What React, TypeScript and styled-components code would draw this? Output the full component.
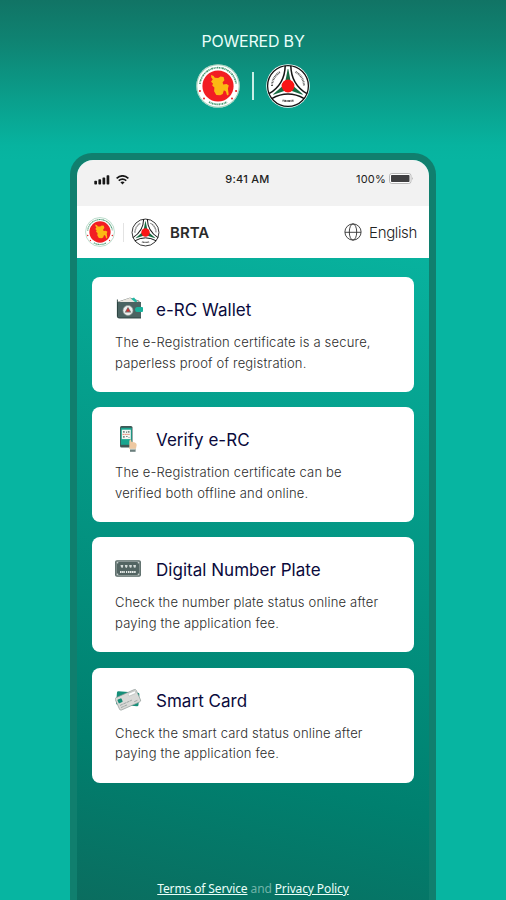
import * as React from 'react'
import styled, { createGlobalStyle } from 'styled-components'

const GlobalStyle = createGlobalStyle`
  * {
    box-sizing: border-box;
  }
  body {
    margin: 0;
    font-family: Inter, 'Liberation Sans', sans-serif;
  }
`

const Page = styled.div`
  width: 506px;
  height: 900px;
  overflow: hidden;
  display: flex;
  flex-direction: column;
  align-items: center;
  background: linear-gradient(180deg, #117465 0, #0f8372 40px, #0a9f8c 100px, #07b39f 145px, #07b5a1 160px);
`

const PoweredBy = styled.div`
  height: 153px;
  flex: none;
  padding-top: 31px;
  display: flex;
  flex-direction: column;
  align-items: center;
`

const PoweredTitle = styled.div`
  font-size: 16px;
  line-height: 20px;
  letter-spacing: -0.2px;
  color: #e9fffa;
`

const LogoPair = styled.div`
  display: flex;
  align-items: center;
  gap: 12px;
  margin-top: 13px;
  svg {
    display: block;
  }
`

const Divider = styled.div<{ height: number; color: string; thickness: number }>`
  width: ${props => props.thickness}px;
  height: ${props => props.height}px;
  background: ${props => props.color};
`

const Phone = styled.div`
  width: 366px;
  height: 780px;
  flex: none;
  padding: 7px 7px 0 7px;
  border-radius: 22px 22px 0 0;
  background: #107f6e;
`

const Screen = styled.div`
  height: 100%;
  overflow: hidden;
  border-radius: 16px 16px 0 0;
  display: flex;
  flex-direction: column;
  background: linear-gradient(193deg, #08b29e 95px, #00806f 640px, #0b6c5e 810px);
`

const StatusBar = styled.div`
  height: 46px;
  flex: none;
  padding: 0 15px 9px 17px;
  display: grid;
  grid-template-columns: 1fr auto 1fr;
  align-items: center;
  background: #f2f2f2;
  color: #222;
  font-size: 11px;
`

const Signals = styled.div`
  display: flex;
  align-items: center;
  gap: 5px;
  padding-top: 2px;
`

const Clock = styled.div`
  font-weight: 500;
  letter-spacing: 0.25px;
  padding-right: 13px;
`

const Battery = styled.div`
  display: flex;
  justify-content: flex-end;
  align-items: center;
  gap: 3px;
  letter-spacing: 0.2px;
`

const AppHeader = styled.header`
  height: 52px;
  flex: none;
  padding: 0 12px 0 8px;
  display: flex;
  align-items: center;
  background: white;
  svg {
    display: block;
  }
`

const HeaderLogos = styled.div`
  display: flex;
  align-items: center;
  gap: 7.5px;
`

const Brand = styled.div`
  margin-left: 10px;
  font-size: 15px;
  font-weight: 600;
  color: #2a2a2a;
`

const Language = styled.div`
  margin-left: auto;
  display: flex;
  align-items: center;
  gap: 7.5px;
  font-size: 15px;
  font-weight: 300;
  letter-spacing: -0.35px;
  color: #222;
`

const Content = styled.main`
  flex: 1;
  padding: 19px 15px 0;
  display: flex;
  flex-direction: column;
  gap: 15.2px;
`

const Card = styled.section`
  height: 115px;
  padding: 18px 23px 0;
  border-radius: 8px;
  background: white;
`

const CardHead = styled.div`
  height: 28px;
  display: flex;
  align-items: center;
  svg {
    flex: none;
    margin-right: 13px;
  }
`

const CardTitle = styled.h2`
  margin: 0;
  padding-top: 2px;
  font-size: 17px;
  font-weight: 400;
  line-height: 28px;
  letter-spacing: 0.03px;
  color: #0a0a3c;
`

const CardText = styled.p`
  margin: 9px 0 0;
  font-size: 13px;
  font-weight: 300;
  line-height: 20.5px;
  letter-spacing: 0.18px;
  color: #2c2c2c;
  white-space: pre-line;
`

const Terms = styled.footer`
  height: 30px;
  flex: none;
  margin-bottom: 23px;
  text-align: center;
  font-family: 'Noto Sans', 'Open Sans', sans-serif;
  font-size: 12px;
  line-height: 18px;
  letter-spacing: -0.12px;
  color: #6fb3a8;
  a {
    color: #eafff9;
    text-decoration: underline;
  }
`

const GovSeal = ({ size }: { size: number }) => (
  <svg width={size} height={size} viewBox="0 0 44 44">
    <circle cx="22" cy="22" r="21.8" fill="#fff" />
    <circle cx="22" cy="22" r="21.2" fill="none" stroke="#3c9a6a" strokeWidth="0.5" />
    <path d="M3.9 20A18.2 18.2 0 0 1 40.1 20" fill="none" stroke="#4b9c74" strokeWidth="1.7" strokeDasharray="1.3 .6 .7 .5 1.8 .6" />
    <path d="M13 38A18.4 18.4 0 0 0 31 38" fill="none" stroke="#4b9c74" strokeWidth="1.8" strokeDasharray="1.4 .6 .8 .5" />
    <circle cx="22" cy="22" r="15.6" fill="#f21d23" />
    <path
      d="M15 11l2.6 1 1.2 1.8 3.4.2 2.4-1.4 3 .4.8 3.2-1.8 2 .6 2.2 3.4-.4 2.2 1.6-.9 3 .8 6-1.6 1-1.2-4.2-2-1.1-1.2 3.8-2.5 1.2-3.9-.4-2.2-3.6.3-3.7-2.2-2 .8-2.2-2-1.7 1.8-2.4-1.4-1.6z"
      fill="#fcb813"
    />
    <g fill="#e5252a">
      <circle cx="3.9" cy="27" r="1.1" />
      <circle cx="8" cy="34.4" r="1" />
      <circle cx="40.1" cy="27" r="1.1" />
      <circle cx="36" cy="34.4" r="1" />
    </g>
  </svg>
)

const BrtaSeal = ({ size }: { size: number }) => (
  <svg width={size} height={size} viewBox="0 0 44 44">
    <circle cx="22" cy="22" r="21.8" fill="#fff" />
    <circle cx="22" cy="22" r="20.4" fill="none" stroke="#151515" strokeWidth="1.3" />
    {[0, 120, 240].map(angle => (
      <g key={angle} transform={`rotate(${angle} 22 22)`}>
        <path d="M5.8 34.6Q22 25.6 38.2 34.6" fill="none" stroke="#151515" strokeWidth="1.5" />
        <path d="M21.7 5L19.4 17h5.2L22.3 5z" fill="#176c42" />
      </g>
    ))}
    <path d="M6 22A16 16 0 0 1 14.4 7.9" fill="none" stroke="#555" strokeWidth="2" strokeDasharray="1 .6 .8 .7" />
    <path d="M29.6 7.9A16 16 0 0 1 38 22" fill="none" stroke="#555" strokeWidth="2" strokeDasharray="1 .6 .8 .7" />
    <path d="M16.5 36.4Q22 37.6 27.5 36.4" fill="none" stroke="#555" strokeWidth="2" strokeDasharray="1.2 .5 1.8 .5" />
    <circle cx="22" cy="22" r="6.4" fill="#fa1515" />
  </svg>
)

const SignalIcon = () => (
  <svg width="17" height="10" viewBox="0 0 17 10" fill="#171717">
    <rect x="0.3" y="5.7" width="2.7" height="3.8" rx=".7" />
    <rect x="4.4" y="4.2" width="2.7" height="5.3" rx=".7" />
    <rect x="8.5" y="2.4" width="2.7" height="7.1" rx=".7" />
    <rect x="12.6" y="0.3" width="2.7" height="9.2" rx=".7" />
  </svg>
)

const WifiIcon = () => (
  <svg width="13" height="10" viewBox="0 0 13 10" fill="none" stroke="#171717" strokeWidth="1.6">
    <path d="M.6 3.4Q6.5-1.8 12.4 3.4M2.7 5.7Q6.5 2.4 10.3 5.7" />
    <path d="M4.4 7.3Q6.5 5.8 8.6 7.3L6.5 9.6z" fill="#171717" stroke="none" />
  </svg>
)

const BatteryIcon = () => (
  <svg width="25" height="11" viewBox="0 0 25 11">
    <rect x=".5" y=".5" width="21.5" height="10" rx="2.3" fill="#fff" stroke="#aaa" strokeWidth=".8" />
    <rect x="2" y="2" width="18.5" height="7" rx=".8" fill="#404042" />
    <path d="M23.4 4q1.2 1.5 0 3z" fill="#999" />
  </svg>
)

const GlobeIcon = () => (
  <svg width="18" height="18" viewBox="0 0 18 18" fill="none" stroke="#333" strokeWidth=".9">
    <circle cx="9" cy="9" r="8.1" />
    <ellipse cx="9" cy="9" rx="3.7" ry="8.1" />
    <path d="M1 9.3h16" />
  </svg>
)

const WalletIcon = () => (
  <svg width="28" height="28" viewBox="0 0 28 28">
    <path d="M3 7l12-4 9 3 1 4H3z" fill="#d8d5cc" stroke="#5b6463" strokeWidth=".6" />
    <path d="M5 7l10-3.5 2 4z" fill="#f4f0ea" />
    <path d="M16 4l3-1.5 2.5 3 1.5 4-4-1z" fill="#20b8a3" />
    <path d="M2 7h24v16H4q-2 0-2-2z" fill="#4b6462" />
    <path d="M3.5 7L15 3l5 4z" fill="#e9e6df" />
    <path d="M2.4 4.5v16.8q0 1.7 1.8 1.7H26" fill="none" stroke="#263d3b" strokeWidth=".9" />
    <path d="M22 12h5q1 0 1 1v3q0 1-1 1h-5q-2 0-2-2.5t2-2.5z" fill="#18b29c" />
    <circle cx="13" cy="15.5" r="5" fill="#eef0ee" stroke="#8c9996" strokeWidth=".7" />
    <path d="M13 11.8l3.4 5.6H9.6z" fill="#74716e" />
    <path d="M13 13l1.8 3.4h-3.6z" fill="#d62a2c" />
  </svg>
)

const PhoneScanIcon = () => (
  <svg width="28" height="28" viewBox="0 0 28 28">
    <rect x="5" y="1" width="12.5" height="21.5" rx="1.5" fill="#3f5755" />
    <rect x="5.8" y="2.8" width="11" height="17" fill="#19a58f" />
    <rect x="6.8" y="4.7" width="9" height="9.4" fill="#f3f7f4" />
    <g fill="#7d8b88">
      <path d="M8 6h1.7v1.7H8zM12.8 6h1.7v1.7h-1.7zM8 11h1.7v1.7H8zM11 6.4h1v1.6h-1zM11 11h1.6v.9H11zM13.4 11.9h1.2v.9h-1.2z" />
    </g>
    <path d="M7.6 9.4h7.4" stroke="#e5583f" strokeWidth=".8" strokeDasharray="1.3 .6" />
    <path d="M14.3 24V18q-.3-2.2.8-3.8l1 .5.4 2 3.4.8q1.8.6 1.8 2.5l-1 5z" fill="#eec8a1" />
    <path d="M15 24h5.6v2.8H15z" fill="#6b7f7d" />
    <path d="M15 23.7h5.8v.9H15z" fill="#d9dfdb" />
  </svg>
)

const PlateIcon = () => (
  <svg width="28" height="28" viewBox="0 0 28 28">
    <rect x="0" y="5.2" width="26" height="16.6" rx="2" fill="#526462" />
    <rect x="1.2" y="6.4" width="23.6" height="14.2" rx="1.5" fill="none" stroke="#a8b1af" strokeWidth=".7" />
    <g fill="#d5dcda">
      <circle cx="2.6" cy="7.8" r=".8" />
      <circle cx="23.4" cy="7.8" r=".8" />
      <circle cx="2.6" cy="19.2" r=".8" />
      <circle cx="23.4" cy="19.2" r=".8" />
      <path d="M5.5 10h2.7v1.2l-.7 1.9-1.5-.9zM9.8 10h2.7v1.2l-.7 1.9-1.5-.9zM14.1 10h2.7v1.2l-.7 1.9-1.5-.9zM18.2 10h2.7v1.2l-.7 1.9-1.5-.9z" />
    </g>
    <path d="M5 17h5m1 0h1m.8 0H21" stroke="#e5eae8" strokeWidth="2.1" strokeDasharray="1.6 .5" />
  </svg>
)

const CardsIcon = () => (
  <svg width="28" height="28" viewBox="0 0 28 28">
    <g transform="translate(0 1.5)">
      <rect x="1.5" y="4.5" width="22.5" height="13.5" rx="1.5" fill="#158f79" transform="rotate(5 13 11)" />
      <g transform="rotate(-24 13 12.5)">
        <rect x="1.5" y="5.5" width="23" height="13.5" rx="1.6" fill="#d9d9d7" stroke="#8c9895" strokeWidth=".6" />
        <rect x="3.2" y="8" width="4.4" height="4" rx=".8" fill="#168c77" />
        <path d="M3.5 14.2h13M3.5 16.6h7M18 16.6h4" stroke="#8d9997" strokeWidth=".7" strokeDasharray="3 .6" />
        <rect x="15.5" y="6.8" width="7.6" height="2.7" rx=".8" fill="#fff" stroke="#a6adab" strokeWidth=".5" />
      </g>
    </g>
  </svg>
)

const services = [
  {
    icon: <WalletIcon />,
    title: 'e-RC Wallet',
    text: 'The e-Registration certificate is a secure,\npaperless proof of registration.'
  },
  {
    icon: <PhoneScanIcon />,
    title: 'Verify e-RC',
    text: 'The e-Registration certificate can be\nverified both offline and online.'
  },
  {
    icon: <PlateIcon />,
    title: 'Digital Number Plate',
    text: 'Check the number plate status online after\npaying the application fee.'
  },
  {
    icon: <CardsIcon />,
    title: 'Smart Card',
    text: 'Check the smart card status online after\npaying the application fee.'
  }
]

const App = () => (
  <>
    <GlobalStyle />
    <Page>
      <PoweredBy>
        <PoweredTitle>POWERED BY</PoweredTitle>
        <LogoPair>
          <GovSeal size={44} />
          <Divider height={28} thickness={1.5} color="#c9eee5" />
          <BrtaSeal size={44} />
        </LogoPair>
      </PoweredBy>
      <Phone>
        <Screen>
          <StatusBar>
            <Signals>
              <SignalIcon />
              <WifiIcon />
            </Signals>
            <Clock>9:41 AM</Clock>
            <Battery>
              100%
              <BatteryIcon />
            </Battery>
          </StatusBar>
          <AppHeader>
            <HeaderLogos>
              <GovSeal size={30} />
              <Divider height={19} thickness={1} color="#e3e3e3" />
              <BrtaSeal size={29} />
            </HeaderLogos>
            <Brand>BRTA</Brand>
            <Language>
              <GlobeIcon />
              English
            </Language>
          </AppHeader>
          <Content>
            {services.map(service => (
              <Card key={service.title}>
                <CardHead>
                  {service.icon}
                  <CardTitle>{service.title}</CardTitle>
                </CardHead>
                <CardText>{service.text}</CardText>
              </Card>
            ))}
          </Content>
          <Terms>
            <a>Terms of Service</a> and <a>Privacy Policy</a>
          </Terms>
        </Screen>
      </Phone>
    </Page>
  </>
)

export default App
